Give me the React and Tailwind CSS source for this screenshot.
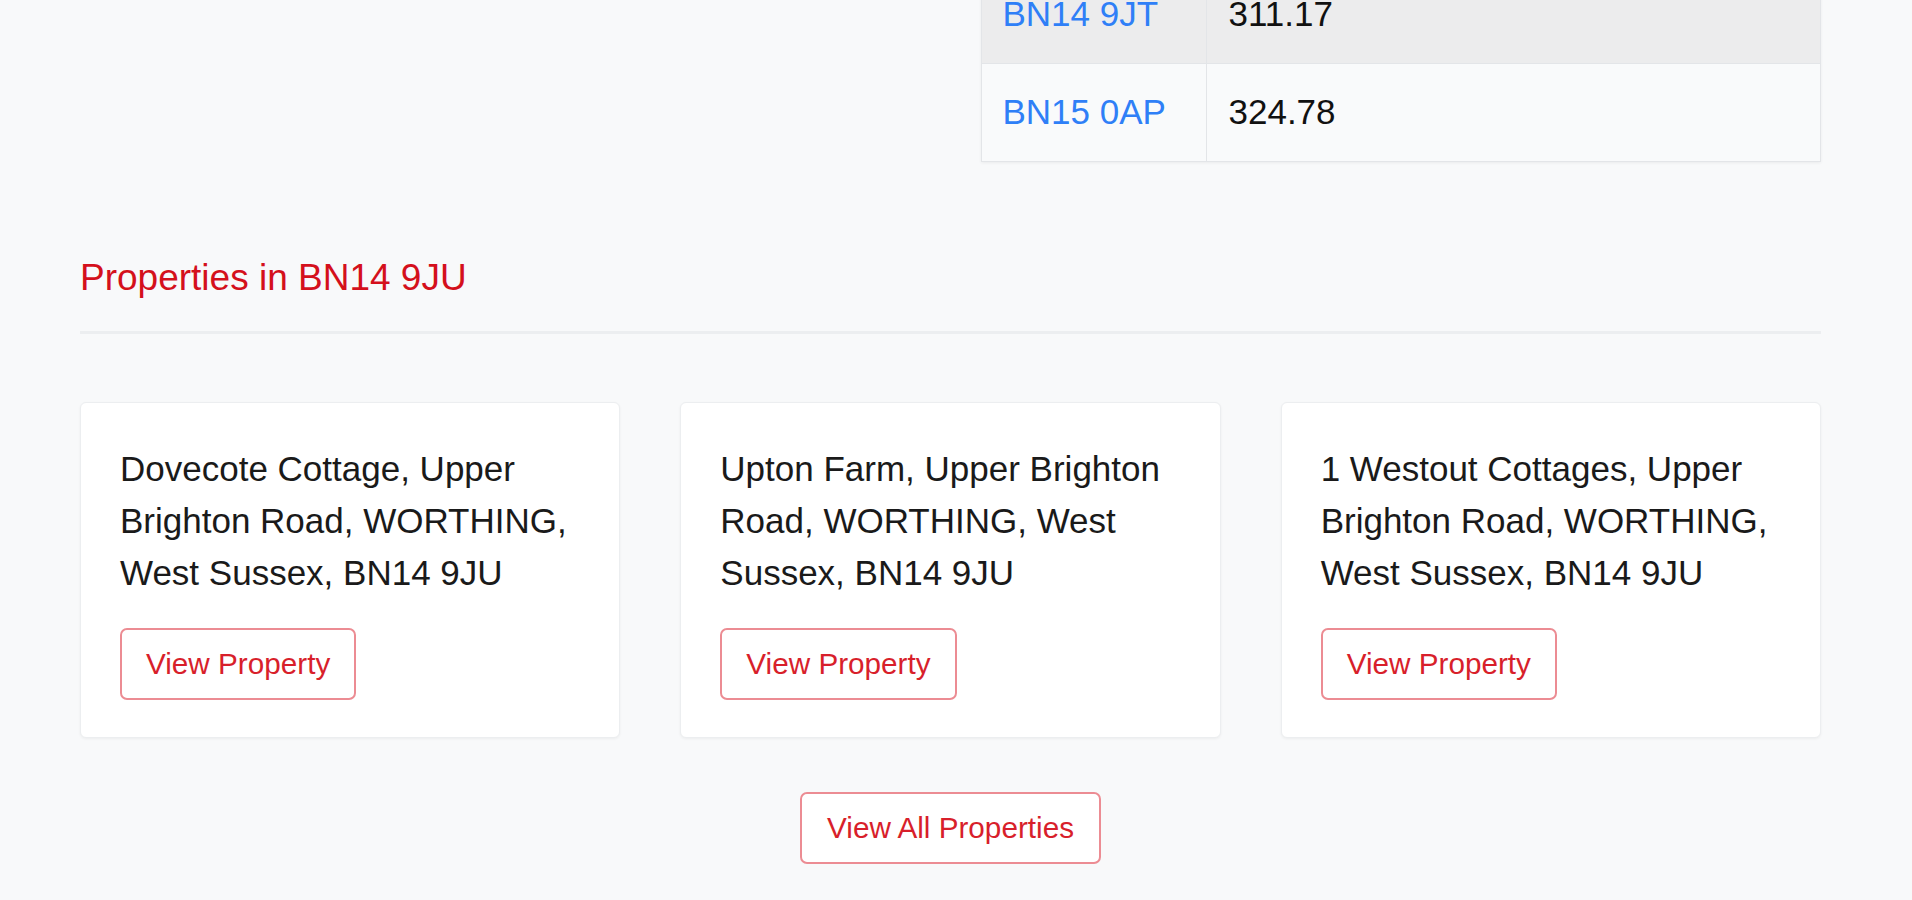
export default function App() {
  const properties = [
    "Dovecote Cottage, Upper Brighton Road, WORTHING, West Sussex, BN14 9JU",
    "Upton Farm, Upper Brighton Road, WORTHING, West Sussex, BN14 9JU",
    "1 Westout Cottages, Upper Brighton Road, WORTHING, West Sussex, BN14 9JU",
  ];

  const rows = [
    { postcode: "BN14 9JT", value: "311.17", shaded: true },
    { postcode: "BN15 0AP", value: "324.78", shaded: false },
  ];

  return (
    <div
      className="min-h-screen overflow-hidden bg-[#f8f9fa] text-[#212529]"
      style={{ fontFamily: '"Liberation Sans", Arial, sans-serif' }}
    >
      <div className="ml-[80px] w-[1741px] -mt-[35px] pb-10">
        {/* nearby postcodes table */}
        <div className="grid grid-cols-2 gap-[60px]">
          <div />
          <table className="w-full border-collapse border border-[#e3e5e8] shadow-[0_1px_3px_rgba(0,0,0,0.06)]">
            <tbody>
              {rows.map((row) => (
                <tr
                  key={row.postcode}
                  className={row.shaded ? "bg-[#ececed]" : "bg-[#f9fafb]"}
                >
                  <td className="h-[98px] w-[225px] border border-[#e3e5e8] px-[21px] text-[35px] text-[#2f7ff7]">
                    {row.postcode}
                  </td>
                  <td className="h-[98px] border border-[#e3e5e8] px-[22px] text-[35px] text-[#111]">
                    {row.value}
                  </td>
                </tr>
              ))}
            </tbody>
          </table>
        </div>

        <h2 className="mt-[94px] text-[37px] leading-[44px] font-normal text-[#d4101c]">
          Properties in BN14 9JU
        </h2>
        <div className="mt-[31px] h-[3px] bg-[#eceef0]" />

        <div className="mt-[68px] grid grid-cols-3 gap-[60px]">
          {properties.map((address) => (
            <div
              key={address}
              className="rounded-[6px] border border-[#eceef0] bg-white px-[39px] pt-[40px] pb-[37px] shadow-[0_1px_3px_rgba(0,0,0,0.05)]"
            >
              <p className="text-[35px] leading-[52px] text-[#1a1a1a]">{address}</p>
              <button
                type="button"
                className="mt-[29px] h-[72px] rounded-[7px] border-2 border-[#ec8c93] bg-white px-[24px] text-[29.7px] text-[#d81f2b]"
              >
                View Property
              </button>
            </div>
          ))}
        </div>

        <div className="mt-[54px] flex justify-center">
          <button
            type="button"
            className="h-[72px] rounded-[7px] border-2 border-[#ec8c93] bg-white px-[25px] text-[29.7px] text-[#d81f2b]"
          >
            View All Properties
          </button>
        </div>
      </div>
    </div>
  );
}
